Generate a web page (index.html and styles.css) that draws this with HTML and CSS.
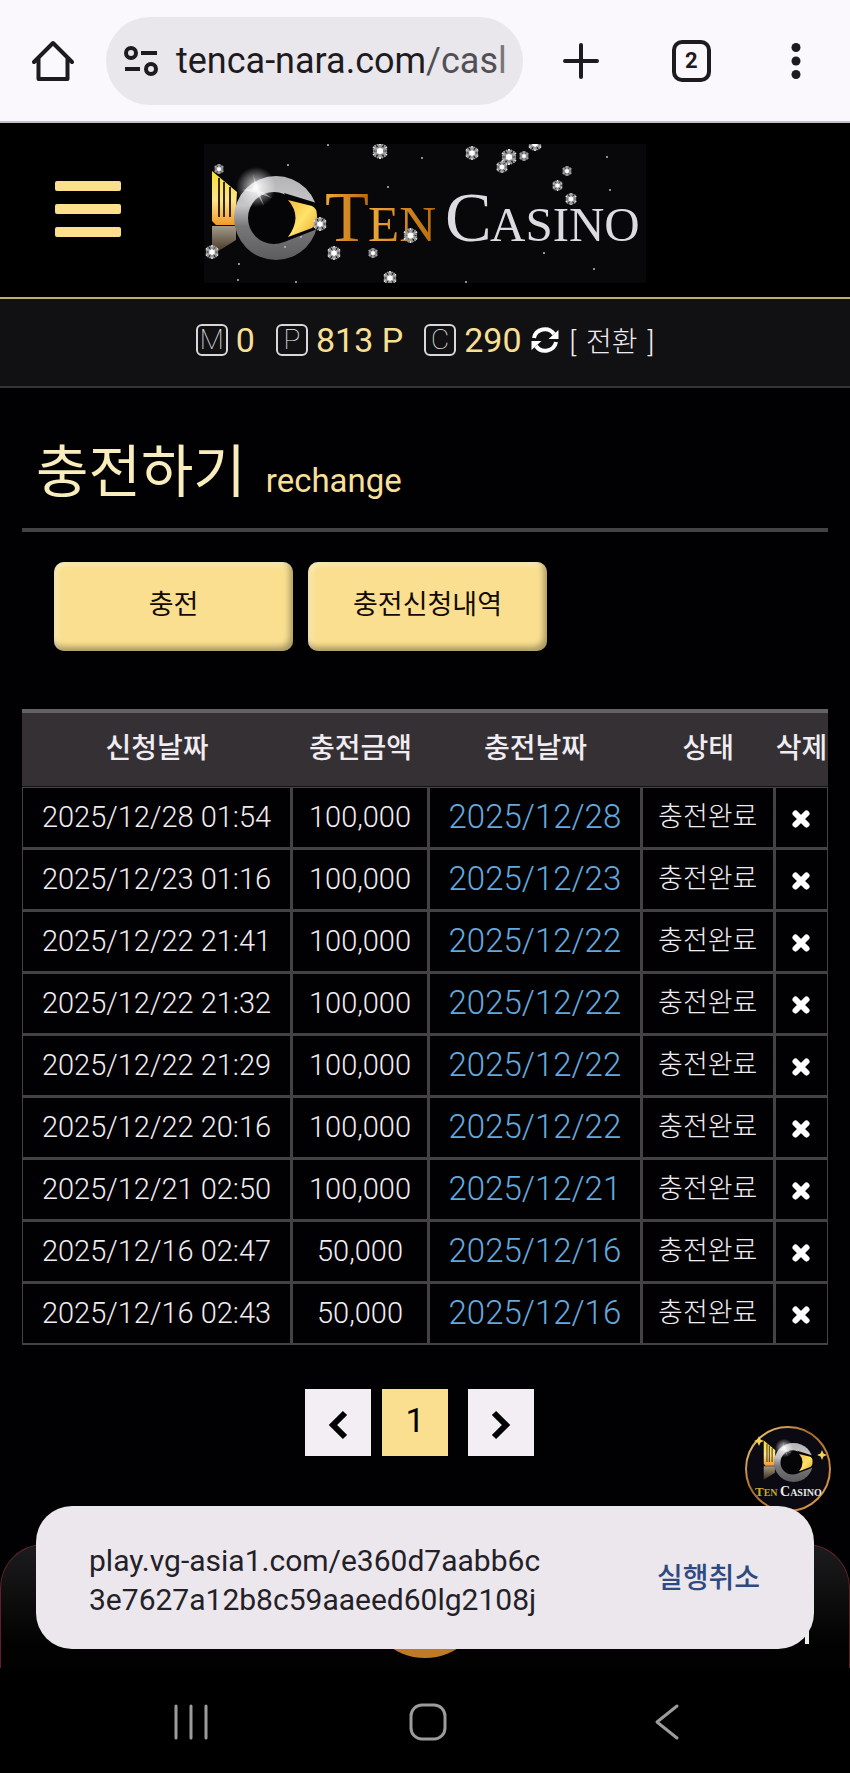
FILE: index.html
```html
<!DOCTYPE html>
<html lang="ko">
<head>
<meta charset="utf-8">
<meta name="viewport" content="width=device-width, initial-scale=1">
<title>충전하기</title>
<link rel="stylesheet" href="styles.css">
</head>
<body>
<svg class="defs" aria-hidden="true">
  <defs>
    <linearGradient id="gold" x1="0" y1="0" x2="0" y2="1"><stop offset="0" stop-color="#f4e02c"/><stop offset=".55" stop-color="#ffe48a"/><stop offset="1" stop-color="#f09a28"/></linearGradient>
    <linearGradient id="eye" x1="0" y1="0" x2="1" y2="1"><stop offset="0" stop-color="#f5b93c"/><stop offset=".5" stop-color="#ffe36a"/><stop offset="1" stop-color="#e9a92c"/></linearGradient>
    <linearGradient id="fin" x1="0" y1="0" x2="0" y2="1"><stop offset="0" stop-color="#a39a8c"/><stop offset="1" stop-color="#3a2b18"/></linearGradient>
    <linearGradient id="ring" x1="0" y1="0" x2="0" y2="1"><stop offset="0" stop-color="#b4b4b6"/><stop offset=".35" stop-color="#c6c6c8"/><stop offset=".6" stop-color="#77777a"/><stop offset="1" stop-color="#5c5c5e"/></linearGradient>
    <radialGradient id="flare"><stop offset="0" stop-color="#fff"/><stop offset=".3" stop-color="#fff" stop-opacity=".6"/><stop offset="1" stop-color="#fff" stop-opacity="0"/></radialGradient>
    <linearGradient id="ten" x1="0" y1="0" x2="1" y2="0"><stop offset="0" stop-color="#f0a83a"/><stop offset="1" stop-color="#b86a0c"/></linearGradient>
    <symbol id="emblem" viewBox="0 0 116 116" overflow="visible">
      <path d="M8 27 L33 48 L31 81 H12 L8 77Z" fill="url(#gold)"/>
      <path d="M15 34V73M20 38V73M26 43V73" stroke="#33260a" stroke-width="2"/>
      <path d="M8 82H32V96L8 111Z" fill="url(#fin)"/>
      <circle cx="72" cy="74" r="42" fill="url(#ring)"/>
      <circle cx="70" cy="74" r="26" fill="#050507"/>
      <path d="M80 49L116 60V84L80 98Q98 74 80 49Z" fill="#050507"/>
      <path d="M84 56L108 62Q113 64 113 72Q113 81 108 84L84 93Q99 73 84 56Z" fill="url(#eye)"/>
      <circle cx="52" cy="43" r="20" fill="url(#flare)"/>
      <path d="M49 30L54 45L60 62L52 48ZM38 46L52 44L68 54L54 49Z" fill="#fff" opacity=".5"/>
    </symbol>
    <symbol id="flake" viewBox="-8 -8 16 16" overflow="visible">
      <circle r="5" fill="#777"/>
      <g stroke="#e4e4e4" stroke-width="2" fill="none">
        <path d="M0-8V8M-7-4L7 4M-7 4L7-4"/>
        <path d="M-3-7L0-4L3-7M-3 7L0 4L3 7M-7-1L-4-2L-5-6M7-1L4-2L5-6M-7 1L-4 2L-5 6M7 1L4 2L5 6" stroke="#999"/>
      </g>
      <circle r="3" fill="#fff"/>
    </symbol>
    <symbol id="cross" viewBox="0 0 20 20"><path d="M4.500 4.500L15.500 15.500M15.500 4.500L4.500 15.500" stroke="#fff" stroke-width="6" stroke-linecap="round"/></symbol>
  </defs>
</svg>

<div class="browser">
  <button class="icon-btn" aria-label="홈"><svg width="42" height="42" viewBox="0 0 42 42"><path d="M2 22L21 3L40 22M6.500 18V39H35.500V18" fill="none" stroke="#1d1b20" stroke-width="4" stroke-linejoin="round" stroke-linecap="round"/></svg></button>
  <button class="url"><svg width="34" height="30" viewBox="0 0 34 30" fill="none" stroke="#1d1b20" stroke-width="4"><circle cx="7" cy="7" r="5"/><path d="M17 7H33M1 23H16"/><circle cx="27" cy="23" r="5"/></svg><span class="url-text">tenca-nara.com<span class="url-path">/cas</span><span class="url-fade">l</span></span></button>
  <button class="icon-btn plus" aria-label="새 탭"><svg width="36" height="36" viewBox="0 0 36 36"><path d="M18 2V34M2 18H34" stroke="#1d1b20" stroke-width="4" stroke-linecap="round"/></svg></button>
  <button class="tabs" aria-label="탭">2</button>
  <button class="icon-btn" aria-label="메뉴"><svg width="12" height="38" viewBox="0 0 12 38" fill="#1d1b20"><circle cx="6" cy="5.500" r="4.500"/><circle cx="6" cy="19" r="4.500"/><circle cx="6" cy="32.500" r="4.500"/></svg></button>
</div>

<header class="header">
  <button class="burger" aria-label="메뉴 열기"><span></span><span></span><span></span></button>
  <a class="logo" href="#" aria-label="Ten Casino">
    <svg width="442" height="139" viewBox="0 0 442 139">
      <rect width="442" height="139" fill="#08080b"/>
      <use href="#emblem" width="116" height="116"/>
      <g class="logo-text" fill="url(#ten)"><text x="121" y="97" font-size="72">T</text><text x="164" y="97" font-size="51">EN</text></g>
      <g class="logo-text" fill="#dcdce0"><text x="241" y="97" font-size="70">C</text><text x="286" y="97" font-size="49">ASINO</text></g>
      <use href="#flake" x="10" y="20" width="10" height="10"/>
      <use href="#flake" x="168" y="-1" width="16" height="16"/>
      <use href="#flake" x="261" y="2" width="14" height="14"/>
      <use href="#flake" x="297" y="5" width="16" height="16"/>
      <use href="#flake" x="315" y="7" width="10" height="10"/>
      <use href="#flake" x="292" y="17" width="12" height="12"/>
      <use href="#flake" x="324" y="-7" width="14" height="14"/>
      <use href="#flake" x="358" y="22" width="10" height="10"/>
      <use href="#flake" x="348" y="36" width="11" height="11"/>
      <use href="#flake" x="361" y="49" width="12" height="12"/>
      <use href="#flake" x="109" y="73" width="14" height="14"/>
      <use href="#flake" x="199" y="84" width="15" height="15"/>
      <use href="#flake" x="123" y="102" width="14" height="14"/>
      <use href="#flake" x="164" y="104" width="10" height="10"/>
      <use href="#flake" x="1" y="101" width="14" height="14"/>
      <use href="#flake" x="179" y="127" width="14" height="14"/>
      <g fill="#bbb"><circle cx="84" cy="21" r="1"/><circle cx="124" cy="1" r="1"/><circle cx="184" cy="43" r="1"/><circle cx="218" cy="14" r="1"/><circle cx="403" cy="13" r="1"/><circle cx="406" cy="46" r="1"/><circle cx="340" cy="109" r="1"/><circle cx="390" cy="125" r="1"/><circle cx="35" cy="120" r="1"/><circle cx="34" cy="136" r="1"/><circle cx="92" cy="138" r="1"/><circle cx="262" cy="138" r="1"/><circle cx="81" cy="103" r="1"/><circle cx="97" cy="93" r="1"/></g>
    </svg>
  </a>
</header>

<section class="balance">
  <span class="tag">M</span><span class="amount">0</span>
  <span class="tag">P</span><span class="amount">813 P</span>
  <span class="tag">C</span><span class="amount last">290</span>
  <button class="refresh" aria-label="새로고침"><svg width="28" height="28" viewBox="0 0 28 28"><g fill="none" stroke="#fff" stroke-width="4"><path d="M3 12A11 10.500 0 0 1 23 8"/><path d="M25 16A11 10.500 0 0 1 5 20"/></g><path d="M27.500 4V13H17.500ZM.500 24V15H10.500Z" fill="#fff"/></svg></button>
  <a class="swap" href="#">[ <span>전환</span> ]</a>
</section>

<main class="content">
  <h1 class="title">충전하기<small>rechange</small></h1>
  <div class="actions"><button>충전</button><button>충전신청내역</button></div>
  <table class="history">
    <colgroup><col class="c1"><col class="c2"><col class="c3"><col class="c4"><col class="c5"></colgroup>
    <thead><tr><th>신청날짜</th><th>충전금액</th><th>충전날짜</th><th>상태</th><th>삭제</th></tr></thead>
    <tbody>
      <tr><td>2025/12/28 01:54</td><td>100,000</td><td class="date">2025/12/28</td><td class="state">충전완료</td><td><button aria-label="삭제"><svg width="20" height="20"><use href="#cross"/></svg></button></td></tr>
      <tr><td>2025/12/23 01:16</td><td>100,000</td><td class="date">2025/12/23</td><td class="state">충전완료</td><td><button aria-label="삭제"><svg width="20" height="20"><use href="#cross"/></svg></button></td></tr>
      <tr><td>2025/12/22 21:41</td><td>100,000</td><td class="date">2025/12/22</td><td class="state">충전완료</td><td><button aria-label="삭제"><svg width="20" height="20"><use href="#cross"/></svg></button></td></tr>
      <tr><td>2025/12/22 21:32</td><td>100,000</td><td class="date">2025/12/22</td><td class="state">충전완료</td><td><button aria-label="삭제"><svg width="20" height="20"><use href="#cross"/></svg></button></td></tr>
      <tr><td>2025/12/22 21:29</td><td>100,000</td><td class="date">2025/12/22</td><td class="state">충전완료</td><td><button aria-label="삭제"><svg width="20" height="20"><use href="#cross"/></svg></button></td></tr>
      <tr><td>2025/12/22 20:16</td><td>100,000</td><td class="date">2025/12/22</td><td class="state">충전완료</td><td><button aria-label="삭제"><svg width="20" height="20"><use href="#cross"/></svg></button></td></tr>
      <tr><td>2025/12/21 02:50</td><td>100,000</td><td class="date">2025/12/21</td><td class="state">충전완료</td><td><button aria-label="삭제"><svg width="20" height="20"><use href="#cross"/></svg></button></td></tr>
      <tr><td>2025/12/16 02:47</td><td>50,000</td><td class="date">2025/12/16</td><td class="state">충전완료</td><td><button aria-label="삭제"><svg width="20" height="20"><use href="#cross"/></svg></button></td></tr>
      <tr><td>2025/12/16 02:43</td><td>50,000</td><td class="date">2025/12/16</td><td class="state">충전완료</td><td><button aria-label="삭제"><svg width="20" height="20"><use href="#cross"/></svg></button></td></tr>
    </tbody>
  </table>
  <nav class="pager" aria-label="페이지">
    <a href="#" aria-label="이전"><svg width="20" height="30" viewBox="0 0 20 30"><path d="M17 3L5 15L17 27" fill="none" stroke="#000" stroke-width="6"/></svg></a>
    <a href="#" class="current">1</a>
    <a href="#" aria-label="다음"><svg width="20" height="30" viewBox="0 0 20 30"><path d="M3 3L15 15L3 27" fill="none" stroke="#000" stroke-width="6"/></svg></a>
  </nav>
</main>

<div class="dock">
  <div class="dock-panel"><span class="dock-orb"></span><span class="dock-mark"></span></div>
  <a class="badge" href="#" aria-label="Ten Casino">
    <svg width="86" height="86" viewBox="0 0 86 86">
      <defs><linearGradient id="rim" x1="0" y1="0" x2="1" y2="1"><stop offset="0" stop-color="#ffe08a"/><stop offset=".4" stop-color="#a8682c"/><stop offset="1" stop-color="#e0a04c"/></linearGradient></defs>
      <circle cx="43" cy="43" r="42" fill="#0b0a12" stroke="url(#rim)" stroke-width="2"/>
      <use href="#emblem" x="15" y="2" width="54" height="54"/>
      <path d="M14 10l1.500 3.500 3.500 1.500-3.500 1.500-1.500 3.500-1.500-3.500-3.500-1.500 3.500-1.500ZM77 24l1.500 3.500 3.500 1.500-3.500 1.500-1.500 3.500-1.500-3.500-3.500-1.500 3.500-1.500Z" fill="#f5cf5c"/>
      <g class="logo-text" font-weight="700"><text x="10" y="70" font-size="13" fill="#c6a92e">T<tspan font-size="10">EN</tspan></text><text x="35" y="70" font-size="14" fill="#e8e8e8">C<tspan font-size="10">ASINO</tspan></text></g>
    </svg>
  </a>
  <div class="snackbar" role="status">
    <p>play.vg-asia1.com/e360d7aabb6c<br>3e7627a12b8c59aaeed60lg2108j</p>
    <button>실행취소</button>
  </div>
</div>

<nav class="system" aria-label="시스템">
  <button aria-label="최근 앱"><svg width="34" height="36" viewBox="0 0 34 36"><path d="M2 2V34M17 2V34M32 2V34" stroke="#9c9c9c" stroke-width="3" stroke-linecap="round"/></svg></button>
  <button class="home" aria-label="홈 화면"><svg width="38" height="38" viewBox="0 0 38 38"><rect x="2" y="2" width="34" height="34" rx="11" fill="none" stroke="#9c9c9c" stroke-width="3"/></svg></button>
  <button aria-label="뒤로"><svg width="26" height="38" viewBox="0 0 26 38"><path d="M23 3L3 19L23 35" fill="none" stroke="#9c9c9c" stroke-width="3" stroke-linecap="round" stroke-linejoin="round"/></svg></button>
</nav>
</body>
</html>
```
FILE: styles.css
```css
* { box-sizing: border-box; }
body {
  margin: 0;
  background: #010002;
  color: #f0edf2;
  font-family: Roboto, "Noto Sans CJK KR", sans-serif;
  font-size: 28px;
}
button { margin: 0; padding: 0; border: 0; background: none; color: inherit; font: inherit; cursor: pointer; }
a { color: inherit; text-decoration: none; }
svg { display: block; flex: none; }
.defs { position: absolute; width: 0; height: 0; }
.logo-text { font-family: "Liberation Serif", serif; }

.browser {
  display: flex;
  align-items: center;
  height: 123px;
  padding: 0 48px 0 32px;
  background: #faf8fd;
  border-bottom: 2px solid #c4c2c6;
}
.url {
  display: flex;
  flex: 1;
  align-items: center;
  gap: 18px;
  height: 88px;
  margin: 0 40px 0 32px;
  padding: 0 16px 0 18px;
  border-radius: 44px;
  background: #e9e7ec;
  color: #1d1b20;
  font-size: 36px;
  white-space: nowrap;
}
.url-path { color: #505055; }
.url-fade { color: #77777c; }
.tabs {
  width: 40px;
  height: 42px;
  margin: 0 79px 0 73px;
  border: 4px solid #1d1b20;
  border-radius: 10px;
  color: #1d1b20;
  font-size: 22px;
  font-weight: 700;
  line-height: 34px;
}

.header {
  display: grid;
  grid-template-columns: 1fr auto 1fr;
  align-items: center;
  height: 176px;
  padding: 0 55px;
  border-bottom: 2px solid #c2ae74;
  background: #000;
}
.burger { display: grid; gap: 13px; width: 66px; padding-bottom: 3px; }
.burger span { height: 10px; border-radius: 2px; background: #fbdf8d; }
.logo { padding-top: 6px; }

.balance {
  display: flex;
  align-items: center;
  justify-content: center;
  height: 89px;
  padding-bottom: 6px;
  border-bottom: 2px solid #353436;
  background: #111113;
}
.tag {
  width: 32px;
  height: 32px;
  margin-right: 8px;
  border: 2px solid #d8d8da;
  border-radius: 6px;
  font-size: 28px;
  font-weight: 100;
  line-height: 28px;
  text-align: center;
}
.amount { margin-right: 21px; color: #f7df93; font-size: 34px; }
.amount.last { margin-right: 9px; }
.swap { margin-left: 11px; font-weight: 300; }
.swap span { padding: 0 3px; }

.content { padding: 46px 22px 50px; }
.title {
  display: flex;
  align-items: baseline;
  gap: 20px;
  margin: 0;
  padding: 0 14px 8px;
  border-bottom: 4px solid #444245;
  font-size: 57px;
  font-weight: 400;
  line-height: 78px;
  color: #f9edbd;
}
.title small { color: #f8df9a; font-size: 33px; }
.actions { display: flex; gap: 15px; padding: 30px 32px 58px; }
.actions button {
  width: 239px;
  height: 89px;
  padding-bottom: 8px;
  border-radius: 10px;
  background: #f9df8f;
  box-shadow: inset -3px -4px 6px #0005, inset 3px 3px 5px #fff6;
  color: #140a05;
  font-size: 27px;
}

.history { width: 100%; border-spacing: 0; table-layout: fixed; text-align: center; }
.c1 { width: 33.500%; }
.c2 { width: 17%; }
.c3 { width: 26.400%; }
.c4 { width: 16.500%; }
.c5 { width: 6.600%; }
.history th {
  height: 78px;
  padding: 0 0 8px;
  border-top: 4px solid #656265;
  background: #353034;
  box-shadow: inset 0 -1px #161416;
  font-weight: 500;
  white-space: nowrap;
}
.history td {
  height: 62px;
  padding: 0 0 2px;
  border: solid #444245;
  border-width: 1px 2px 2px 1px;
  font-size: 29px;
  font-weight: 300;
  line-height: 40px;
}
.history td:last-child { border-right-width: 1px; }
.history .date { color: #62a9de; font-size: 33px; }
.history .state { font-size: 27px; }
.history td button { display: block; margin: 4px auto 0; }

.pager { display: flex; justify-content: center; gap: 11px; padding: 44px 11px 0 0; }
.pager a { display: grid; place-items: center; width: 66px; height: 67px; background: #f2eef3; color: #000; }
.pager svg { margin-top: 4px; }
.pager .current { margin-right: 9px; padding-bottom: 6px; background: #fbdf90; font-size: 34px; }

.dock { position: relative; height: 162px; padding-top: 38px; }
.dock-panel {
  position: relative;
  height: 124px;
  overflow: hidden;
  border: 1px solid #5c2326;
  border-bottom: 0;
  border-radius: 44px 44px 0 0;
  background: linear-gradient(#1c1b1d, #020202 80%);
}
.dock-orb { position: absolute; left: 50%; bottom: 10px; width: 120px; height: 120px; margin-left: -60px; border-radius: 50%; background: #c07a26; }
.dock-mark { position: absolute; right: 40px; bottom: 24px; width: 4px; height: 20px; background: #eee; }
.badge { position: absolute; top: -80px; right: 19px; }
.snackbar {
  position: absolute;
  top: 0;
  left: 36px;
  right: 36px;
  display: flex;
  align-items: center;
  justify-content: space-between;
  height: 143px;
  padding: 0 54px 0 53px;
  border-radius: 36px;
  background: #ebe7ed;
  color: #232127;
}
.snackbar p { margin: 0; padding-top: 5px; font-size: 30px; line-height: 39px; }
.snackbar button { padding-bottom: 4px; color: #2f4a80; font-weight: 500; }

.system {
  display: flex;
  justify-content: space-between;
  align-items: center;
  height: 107px;
  padding: 0 170px 0 174px;
  background: #000;
}
.system .home { margin-right: 6px; }
```
